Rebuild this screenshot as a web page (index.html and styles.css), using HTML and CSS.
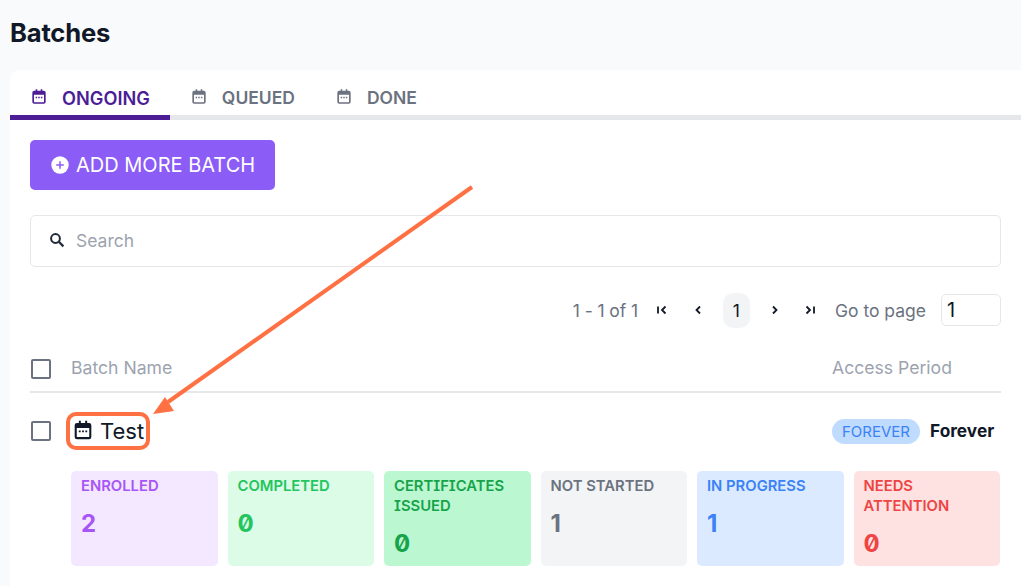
FILE: index.html
```html
<!DOCTYPE html>
<html lang="en">
<head>
<meta charset="utf-8">
<title>Batches</title>
<link rel="stylesheet" href="styles.css">
</head>
<body>
<svg width="0" height="0" class="defs">
  <symbol id="cal" viewBox="0 0 24 24"><path fill="currentColor" d="M7 1h2.400v2.500h5.200V1H17v2.500h2.200A2.800 2.800 0 0 1 22 6.300v14a2.800 2.800 0 0 1-2.800 2.700H4.800A2.800 2.800 0 0 1 2 20.300v-14a2.800 2.800 0 0 1 2.800-2.800H7V1zM4.500 9.500v10.300c0 .4.300.7.700.7h13.600c.4 0 .7-.3.700-.7V9.500H4.500zM7 12.500h2.200v2.200H7zM10.900 12.500h2.200v2.200h-2.200zM14.800 12.500H17v2.200h-2.200z"/></symbol>
</svg>
<h1 class="title">Batches</h1>
<main class="card">
  <nav class="tabs">
    <a class="tab active"><svg class="tab-icon"><use href="#cal"/></svg>ONGOING</a>
    <a class="tab"><svg class="tab-icon"><use href="#cal"/></svg>QUEUED</a>
    <a class="tab"><svg class="tab-icon"><use href="#cal"/></svg>DONE</a>
  </nav>
  <div class="content">
    <button class="add-btn">
      <svg class="plus" viewBox="0 0 18 18"><circle cx="9" cy="9" r="8.700" fill="#fff"/><path d="M9 5.200v7.600M5.200 9h7.600" stroke="#8b5cf6" stroke-width="1.500"/></svg>
      ADD MORE BATCH
    </button>
    <label class="search">
      <svg class="search-icon" viewBox="0 0 16 16"><circle cx="6.500" cy="6.500" r="4.400" fill="none" stroke="#1f2937" stroke-width="2"/><path d="M9.800 9.800l4.600 4.600" stroke="#1f2937" stroke-width="2.200"/></svg>
      <span>Search</span>
    </label>
    <div class="pager">
      <span class="range">1 - 1 of 1</span>
      <svg class="pg pg-first" viewBox="0 0 12 12"><path d="M2 2.500v7M9.500 2.500L6 6l3.500 3.500"/></svg>
      <svg class="pg pg-prev" viewBox="0 0 12 12"><path d="M8 2.500L4.500 6 8 9.500"/></svg>
      <span class="pg-num">1</span>
      <svg class="pg pg-next" viewBox="0 0 12 12"><path d="M4 2.500L7.500 6 4 9.500"/></svg>
      <svg class="pg pg-last" viewBox="0 0 12 12"><path d="M2.500 2.500L6 6 2.500 9.500M10 2.500v7"/></svg>
      <span class="goto">Go to page</span>
      <span class="page-input">1</span>
    </div>
    <div class="head-row">
      <span class="check"></span>
      <span class="head-name">Batch Name</span>
      <span class="head-access">Access Period</span>
    </div>
    <div class="batch-row">
      <span class="check"></span>
      <span class="batch-name"><svg class="batch-icon"><use href="#cal"/></svg>Test</span>
      <span class="badge">FOREVER</span>
      <span class="period">Forever</span>
    </div>
    <div class="stats">
      <div class="stat purple"><div class="stat-label">ENROLLED</div><div class="stat-value">2</div></div>
      <div class="stat green"><div class="stat-label">COMPLETED</div><div class="stat-value">0</div></div>
      <div class="stat dark-green"><div class="stat-label">CERTIFICATES ISSUED</div><div class="stat-value">0</div></div>
      <div class="stat gray"><div class="stat-label">NOT STARTED</div><div class="stat-value">1</div></div>
      <div class="stat blue"><div class="stat-label">IN PROGRESS</div><div class="stat-value">1</div></div>
      <div class="stat red"><div class="stat-label">NEEDS ATTENTION</div><div class="stat-value">0</div></div>
    </div>
  </div>
</main>
<svg class="arrow" viewBox="0 0 1021 586"><path d="M472 187L168 402" stroke="#ff7043" stroke-width="4" fill="none"/><path d="M153 414L165 397L174 411Z" fill="#ff7043"/></svg>
</body>
</html>
```
FILE: styles.css
```css
* { box-sizing: border-box; }
html, body { margin: 0; height: 586px; overflow: hidden; }
body {
  background: #f9fafb;
  font-family: Inter, "Liberation Sans", sans-serif;
  position: relative;
  padding: 0 0 0 10px;
  color: #111827;
}
.defs { position: absolute; }
.title {
  margin: 0;
  padding-top: 17px;
  height: 70px;
  font-size: 25.6px;
  line-height: 32px;
  font-weight: 700;
  color: #111827;
  font-family: Inter, sans-serif;
  letter-spacing: -0.2px;
}
.card {
  background: #fff;
  border-radius: 10px 0 0 0;
  height: 516px;
}
.tabs {
  display: flex;
  height: 50px;
  border-bottom: 5px solid #e5e7eb;
}
.tab {
  display: flex;
  align-items: center;
  height: 50px;
  padding: 10px 20px 0 22px;
  border-bottom: 5px solid transparent;
  font-size: 17.500px;
  font-weight: 600;
  color: #6b7280;
  gap: 15px;
}
.tab.active { color: #4c1d95; border-bottom-color: #4c1d95; font-size: 18.200px; }
.tab-icon { width: 16px; height: 17px; margin: -2px 0 0 -1px; }
.content { padding: 20px 20px 0; width: 1011px; }
.add-btn {
  display: flex;
  align-items: center;
  gap: 7px;
  width: 245px;
  height: 50px;
  padding: 0 0 0 21px;
  border: 0;
  border-radius: 5px;
  background: #8b5cf6;
  color: #fff;
  font: 400 20px Inter, sans-serif;
}
.plus { width: 18px; height: 18px; }
.search {
  display: flex;
  align-items: center;
  gap: 11px;
  height: 52px;
  margin-top: 25px;
  padding: 0 0 2px 18px;
  border: 1px solid #e5e7eb;
  border-radius: 5px;
  color: #9ca3af;
  font-size: 17.500px;
}
.search-icon { width: 16px; height: 16px; }
.pager {
  display: flex;
  align-items: center;
  justify-content: flex-end;
  height: 34px;
  margin-top: 26px;
  color: #6b7280;
  font-size: 17.500px;
}
.range { margin-right: 18px; letter-spacing: -0.1px; }
.pg { width: 12px; height: 12px; fill: none; stroke: #111827; stroke-width: 1.800; flex: none; }
.pg-prev { margin-left: 24px; }
.pg-num {
  display: flex;
  align-items: center;
  justify-content: center;
  width: 27px;
  height: 35px;
  margin: 0 19px;
  border-radius: 10px;
  background: #f3f4f6;
  color: #111827;
}
.pg-last { margin-left: 23px; }
.goto { margin-left: 19px; }
.page-input {
  width: 60px;
  height: 32px;
  margin-left: 15px;
  padding: 3px 0 0 5px;
  border: 1px solid #e5e7eb;
  border-radius: 5px;
  color: #111827;
  font-size: 20px;
  line-height: 24px;
  background: #fff;
}
.head-row {
  display: flex;
  align-items: center;
  height: 59px;
  margin-top: 7px;
  padding: 12px 0 0 1px;
  border-bottom: 2px solid #e5e7eb;
  color: #9ca3af;
  font-size: 17.600px;
}
.check {
  width: 20px;
  height: 20px;
  flex: none;
  border: 2px solid #6b7280;
  border-radius: 2px;
}
.head-name { margin-left: 20px; flex: 1; padding-bottom: 2px; }
.head-access { width: 169px; padding-bottom: 2px; }
.batch-row {
  display: flex;
  align-items: center;
  height: 78px;
  padding: 0 0 2px 1px;
}
.batch-name {
  display: flex;
  align-items: center;
  gap: 7px;
  width: 84px;
  height: 38px;
  margin-left: 15px;
  padding-left: 3px;
  border: 4px solid #ff7043;
  border-radius: 10px;
  font-size: 22px;
  white-space: nowrap;
}
.batch-icon { width: 20px; height: 22px; flex: none; margin-top: -2px; }
.badge {
  margin-left: 682px;
  width: 88px;
  height: 25px;
  border-radius: 13px;
  background: #bfdbfe;
  color: #3b82f6;
  font-size: 15px;
  line-height: 25px;
  text-align: center;
  flex: none;
}
.period { margin: -2px 0 0 10px; font-size: 17.300px; font-weight: 700; }
.stats {
  display: grid;
  grid-template-columns: repeat(6, 1fr);
  gap: 10px;
  margin-left: 41px;
  margin-right: 1px;
  height: 95px;
}
.stat {
  padding: 5px 10px 0;
  border-radius: 5px;
  font-size: 14.800px;
}
.stat-label { line-height: 20px; font-weight: 600; }
.stat-value {
  margin-top: 13px;
  font-size: 24px;
  line-height: 30px;
  font-weight: 700;
  font-variant-numeric: slashed-zero;
}
.purple { background: #f3e8ff; color: #a855f7; }
.green { background: #dcfce7; color: #22c55e; }
.dark-green { background: #bbf7d0; color: #16a34a; }
.dark-green .stat-label { font-feature-settings: "ss02"; }
.gray { background: #f3f4f6; color: #6b7280; }
.blue { background: #dbeafe; color: #3b82f6; }
.red { background: #fee2e2; color: #ef4444; }
.arrow {
  position: absolute;
  left: 0;
  top: 0;
  width: 1021px;
  height: 586px;
  pointer-events: none;
}
```
